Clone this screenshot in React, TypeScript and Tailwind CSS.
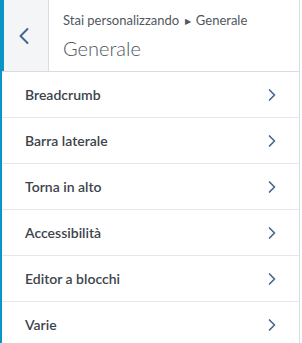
import { ChevronLeft, ChevronRight } from 'lucide-react';

const sections = ['Breadcrumb', 'Barra laterale', 'Torna in alto', 'Accessibilità', 'Editor a blocchi', 'Varie'];

export default function App() {
  return (
    <div
      className="h-[343px] w-[302px] overflow-hidden bg-white"
      style={{ fontFamily: 'Lato, "Noto Sans", sans-serif' }}
    >
      <div className="h-full w-[300px] border-r border-l-2 border-r-[#dcdcde] border-l-[#0a95c7]">
        <div className="flex h-[72px] border-b border-[#dcdcde]">
          <button className="flex w-[47px] shrink-0 items-center justify-center border-l-2 border-r border-l-[#0a95c7] border-r-[#dcdcde] bg-[#f4f5f7] pr-[4px] text-[#44668e]">
            <ChevronLeft size={28} strokeWidth={1.7} />
          </button>
          <div className="flex flex-col pl-[14px] pt-[10px]">
            <span className="text-[13px] leading-5 text-[#50575e]">
              Stai personalizzando <span className="mx-[2px] text-[8px] align-[1px]">▶</span> Generale
            </span>
            <span className="mt-[3px] text-[20px] font-light leading-7 text-[#50575e]">Generale</span>
          </div>
        </div>
        <ul>
          {sections.map((s) => (
            <li
              key={s}
              className="flex h-[46px] items-center justify-between border-b border-[#e6e6e8] pl-[23px] pr-[17px]"
            >
              <span className="text-[14px] font-semibold text-[#3c434a]">{s}</span>
              <ChevronRight size={20} strokeWidth={2} className="text-[#44668e]" />
            </li>
          ))}
        </ul>
      </div>
    </div>
  );
}
